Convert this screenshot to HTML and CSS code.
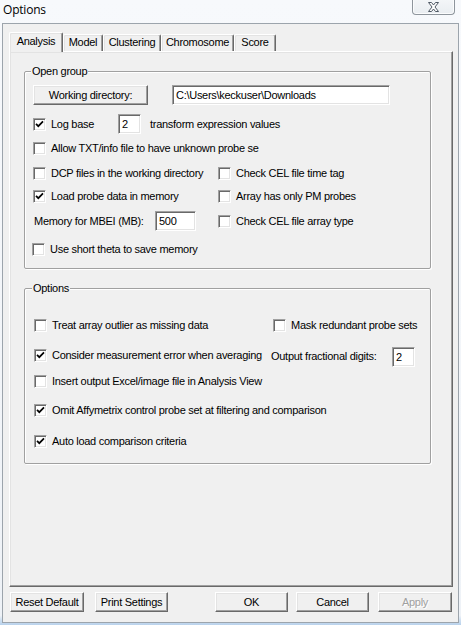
FILE: index.html
```html
<!DOCTYPE html>
<html>
<head>
<meta charset="utf-8">
<link rel="stylesheet" href="styles.css">
</head>
<body>
<div class="frame">
  <div class="titlebar">
    <span class="title">Options</span>
    <div class="close">
      <svg width="13" height="10" viewBox="0 0 13 10"><polygon points="1.5,0.5 4.5,0.5 6.5,3 8.5,0.5 11.5,0.5 8,5 11.5,9.5 8.5,9.5 6.5,7 4.5,9.5 1.5,9.5 5,5" fill="#fdfdfd" stroke="#4f5965" stroke-width="1" stroke-linejoin="round"/></svg>
    </div>
  </div>
  <div class="client">
    <div class="tabstrip">
      <div class="tab sel w-analysis">Analysis</div>
      <div class="tab w-model">Model</div>
      <div class="tab w-clust">Clustering</div>
      <div class="tab w-chrom">Chromosome</div>
      <div class="tab w-score">Score</div>
    </div>
    <div class="panel">
      <div class="group g-open">
        <div class="legend">Open group</div>
        <div class="row r-wd">
          <div class="btn b-wd">Working directory:</div>
          <div class="edit e-path">C:\Users\keckuser\Downloads</div>
        </div>
        <div class="row r-log">
          <div class="cb cb-log"><span class="box on"><svg width="11" height="11" viewBox="0 0 11 11"><path d="M2 4.8 L4.3 7.2 L9 2.4" fill="none" stroke="#000" stroke-width="1.7"/></svg></span><span class="lbl">Log base</span></div>
          <div class="edit e-log">2</div>
          <span class="lbl t-after">transform expression values</span>
        </div>
        <div class="row r-allow">
          <div class="cb"><span class="box"></span><span class="lbl">Allow TXT/info file to have unknown probe se</span></div>
        </div>
        <div class="row r-dcp">
          <div class="col-l"><div class="cb"><span class="box"></span><span class="lbl">DCP files in the working directory</span></div></div>
          <div class="cb"><span class="box"></span><span class="lbl">Check CEL file time tag</span></div>
        </div>
        <div class="row r-load">
          <div class="col-l"><div class="cb"><span class="box on"><svg width="11" height="11" viewBox="0 0 11 11"><path d="M2 4.8 L4.3 7.2 L9 2.4" fill="none" stroke="#000" stroke-width="1.7"/></svg></span><span class="lbl">Load probe data in memory</span></div></div>
          <div class="cb"><span class="box"></span><span class="lbl">Array has only PM probes</span></div>
        </div>
        <div class="row r-mem">
          <div class="col-l mem"><span class="lbl l-mem">Memory for MBEI (MB):</span><div class="edit e-mem">500</div></div>
          <div class="cb"><span class="box"></span><span class="lbl">Check CEL file array type</span></div>
        </div>
        <div class="row r-theta">
          <div class="cb"><span class="box"></span><span class="lbl">Use short theta to save memory</span></div>
        </div>
      </div>

      <div class="group g-opts">
        <div class="legend">Options</div>
        <div class="row r-treat">
          <div class="col-ol"><div class="cb"><span class="box"></span><span class="lbl">Treat array outlier as missing data</span></div></div>
          <div class="cb"><span class="box"></span><span class="lbl">Mask redundant probe sets</span></div>
        </div>
        <div class="row r-cons">
          <div class="col-ol2"><div class="cb"><span class="box on"><svg width="11" height="11" viewBox="0 0 11 11"><path d="M2 4.8 L4.3 7.2 L9 2.4" fill="none" stroke="#000" stroke-width="1.7"/></svg></span><span class="lbl">Consider measurement error when averaging</span></div></div>
          <div class="digits"><span class="lbl l-dig">Output fractional digits:</span><div class="edit e-dig">2</div></div>
        </div>
        <div class="row r-ins">
          <div class="cb"><span class="box"></span><span class="lbl">Insert output Excel/image file in Analysis View</span></div>
        </div>
        <div class="row r-omit">
          <div class="cb"><span class="box on"><svg width="11" height="11" viewBox="0 0 11 11"><path d="M2 4.8 L4.3 7.2 L9 2.4" fill="none" stroke="#000" stroke-width="1.7"/></svg></span><span class="lbl">Omit Affymetrix control probe set at filtering and comparison</span></div>
        </div>
        <div class="row r-auto">
          <div class="cb"><span class="box on"><svg width="11" height="11" viewBox="0 0 11 11"><path d="M2 4.8 L4.3 7.2 L9 2.4" fill="none" stroke="#000" stroke-width="1.7"/></svg></span><span class="lbl">Auto load comparison criteria</span></div>
        </div>
      </div>
    </div>
    <div class="buttons">
      <div class="btn b-reset">Reset Default</div>
      <div class="btn b-print">Print Settings</div>
      <div class="btn b-ok">OK</div>
      <div class="btn b-cancel">Cancel</div>
      <div class="btn b-apply disabled">Apply</div>
    </div>
  </div>
</div>
</body>
</html>
```
FILE: styles.css
```css
* { box-sizing: border-box; }
html, body { margin: 0; padding: 0; }
body {
  width: 461px;
  height: 625px;
  overflow: hidden;
  background: linear-gradient(180deg, #f7f9fc 0%, #f2f5f9 60%, #eef2f7 100%);
  font-family: "Liberation Sans", Arial, sans-serif;
  font-size: 11px;
  letter-spacing: -0.28px;
  color: #000;
}
.frame {
  width: 461px;
  height: 625px;
  background: linear-gradient(180deg, rgba(255,255,255,0) 0%, rgba(255,255,255,0) 98.5%, #cfe0f1 99.2%, #b9d2ec 100%);
}
.titlebar {
  height: 23px;
  display: flex;
  justify-content: space-between;
  align-items: flex-start;
}
.title {
  font-family: "Open Sans", "Noto Sans", sans-serif;
  font-size: 12px;
  letter-spacing: -0.2px;
  line-height: 14px;
  margin-top: 3px;
  margin-left: 3px;
  color: #000;
}
.close {
  width: 43px;
  height: 16px;
  margin-top: -1px;
  margin-right: 6px;
  border: 1px solid #8e959c;
  border-top: none;
  border-radius: 0 0 4px 4px;
  background: linear-gradient(180deg, #f4f6f8 0%, #e9edf1 100%);
  box-shadow: inset 0 -1px 0 #fbfcfd, inset 1px 0 0 #fbfcfd, inset -1px 0 0 #fbfcfd;
  display: flex;
  justify-content: center;
  align-items: center;
  padding-top: 1px;
}
.client {
  margin-left: 2px;
  width: 457px;
  height: 600px;
  background: #f0f0f0;
  border: 1px solid #9ca4ac;
  padding-top: 8px;
  padding-left: 6px;
}
.tabstrip {
  display: flex;
  align-items: flex-end;
  height: 19px;
}
.tab {
  height: 17px;
  border-top: 1px solid #fff;
  border-left: 1px solid #fff;
  border-right: 1px solid #696969;
  border-radius: 2px 2px 0 0;
  box-shadow: inset -1px 0 0 #a0a0a0, inset 1px 1px 0 #e3e3e3;
  background: #f0f0f0;
  text-align: center;
  line-height: 15px;
  white-space: nowrap;
}
.tab.sel {
  height: 20px;
  margin-bottom: -1px;
  position: relative;
  z-index: 1;
  line-height: 17px;
}
.w-analysis { width: 54px; }
.w-model { width: 40px; }
.w-clust { width: 58px; }
.w-chrom { width: 73px; }
.w-score { width: 42px; }
.panel {
  width: 444px;
  height: 536px;
  border-top: 1px solid #fff;
  border-left: 1px solid #fff;
  border-right: 1px solid #696969;
  border-bottom: 1px solid #696969;
  box-shadow: inset -1px -1px 0 #a0a0a0, inset 1px 1px 0 #e3e3e3;
  padding-top: 19px;
  padding-left: 14px;
}
.group {
  width: 407px;
  border: 1px solid #a0a0a0;
  box-shadow: inset 1px 1px 0 #fff, 1px 1px 0 #fff;
  border-radius: 2px;
}
.g-open { height: 198px; padding-left: 8px; }
.g-opts { height: 176px; margin-top: 19px; padding-left: 9px; }
.legend {
  margin-top: -7px;
  margin-left: -2px;
  height: 13px;
  line-height: 13px;
  padding: 0 1px;
  width: fit-content;
  background: #f0f0f0;
}
.row {
  display: flex;
  align-items: center;
  height: 20px;
  white-space: nowrap;
}
.cb { display: flex; align-items: center; }
.box {
  width: 13px;
  height: 13px;
  flex: none;
  background: #fff;
  border-top: 1px solid #a0a0a0;
  border-left: 1px solid #a0a0a0;
  border-right: 1px solid #fff;
  border-bottom: 1px solid #fff;
  box-shadow: inset 1px 1px 0 #696969, inset -1px -1px 0 #e3e3e3;
  margin-right: 5px;
  display: flex;
}
.box svg { display: block; margin: 0; }
.lbl { line-height: 13px; }
.btn {
  height: 20px;
  border-top: 1px solid #fff;
  border-left: 1px solid #fff;
  border-right: 1px solid #696969;
  border-bottom: 1px solid #696969;
  box-shadow: inset -1px -1px 0 #a0a0a0, inset 1px 1px 0 #e3e3e3;
  background: #f0f0f0;
  text-align: center;
  line-height: 18px;
  white-space: nowrap;
}
.edit {
  height: 20px;
  background: #fff;
  border-top: 1px solid #a0a0a0;
  border-left: 1px solid #a0a0a0;
  border-right: 1px solid #fff;
  border-bottom: 1px solid #fff;
  box-shadow: inset 1px 1px 0 #696969, inset -1px -1px 0 #e3e3e3;
  padding-left: 3px;
  line-height: 18px;
  white-space: nowrap;
  overflow: hidden;
}
/* open group rows */
.r-wd { margin-top: 7px; }
.b-wd { width: 115px; }
.e-path { width: 218px; margin-left: 24px; }
.r-log { margin-top: 9px; }
.cb-log { width: 85px; }
.e-log { width: 23px; }
.t-after { margin-left: 9px; }
.r-allow { margin-top: 4px; }
.r-dcp { margin-top: 5px; }
.col-l { width: 185px; display: flex; align-items: center; }
.r-load { margin-top: 3px; }
.r-mem { margin-top: 5px; }
.mem { padding-left: 1px; }
.l-mem { width: 121px; }
.e-mem { width: 41px; }
.r-theta { margin-top: 8px; margin-left: -1px; }
/* options group rows */
.r-treat { margin-top: 20px; }
.col-ol { width: 239px; }
.r-cons { margin-top: 10px; }
.col-ol2 { width: 237px; }
.digits { display: flex; align-items: center; margin-top: 3px; }
.l-dig { width: 121px; }
.e-dig { width: 23px; }
.r-ins { margin-top: 6px; }
.r-omit { margin-top: 9px; }
.r-auto { margin-top: 11px; }
/* bottom buttons */
.buttons {
  display: flex;
  margin-top: 5px;
  margin-left: 1px;
}
.b-reset { width: 74px; }
.b-print { width: 73px; margin-left: 11px; }
.b-ok { width: 73px; margin-left: 47px; }
.b-cancel { width: 73px; margin-left: 8px; }
.b-apply { width: 74px; margin-left: 9px; }
.disabled { color: #a0a0a0; text-shadow: 1px 1px 0 #fff; }
```
